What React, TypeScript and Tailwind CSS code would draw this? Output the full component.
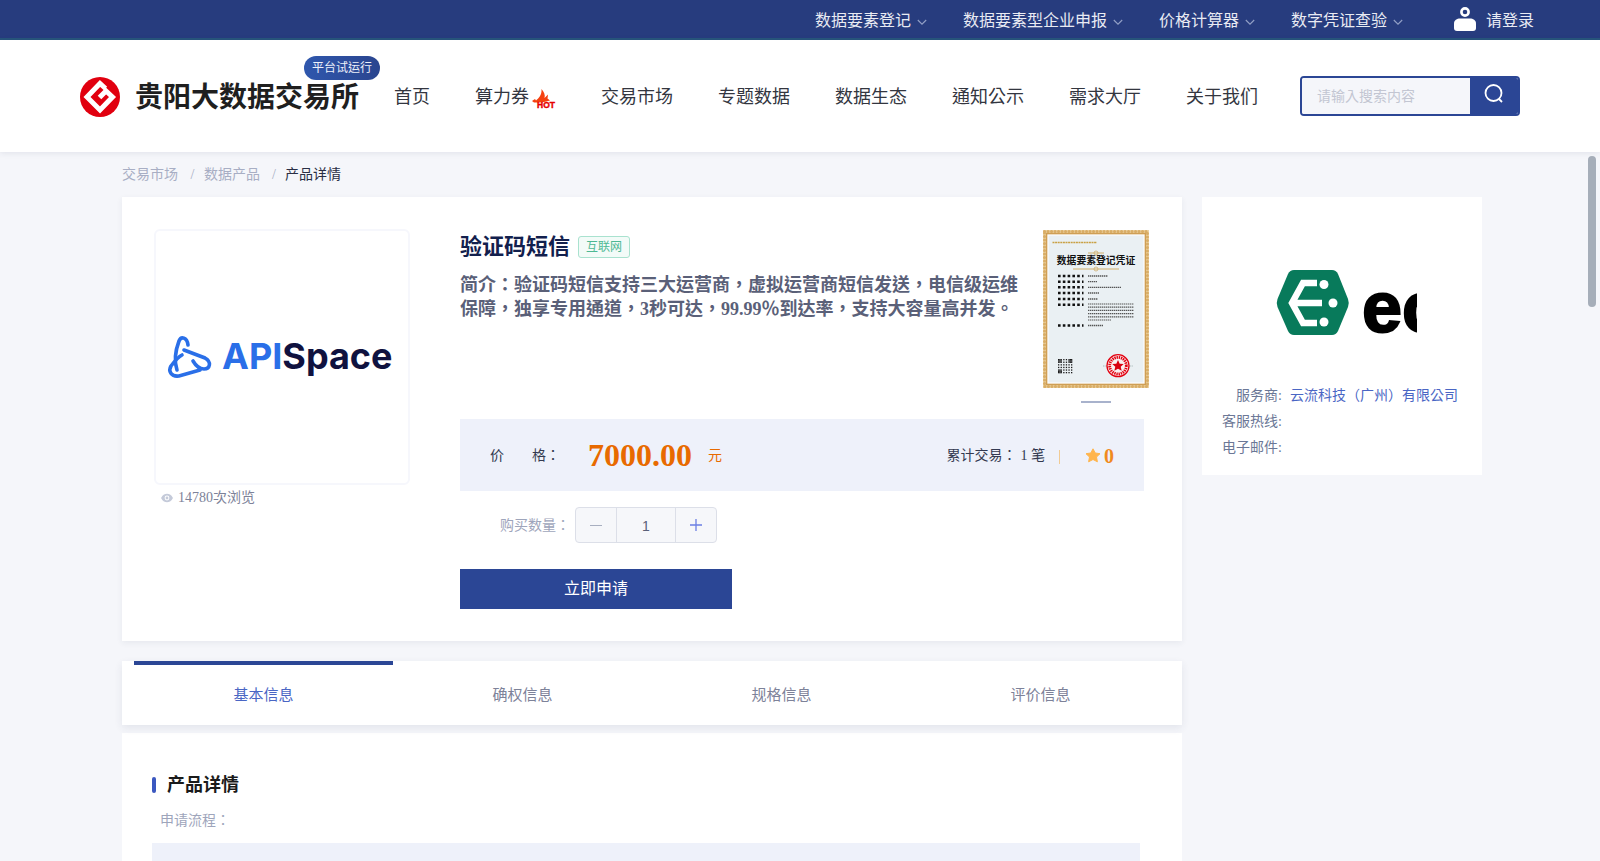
import React from "react";

const Chevron = () => (
  <svg width="10" height="10" viewBox="0 0 10 10" fill="none" stroke="#93a0c6" strokeWidth="1.100" className="ml-[6px] mt-[2px]">
    <path d="M0.8 3 L5 7.2 L9.2 3" />
  </svg>
);

const topItems = ["数据要素登记", "数据要素型企业申报", "价格计算器", "数字凭证查验"];
const navItems = ["交易市场", "专题数据", "数据生态", "通知公示", "需求大厅", "关于我们"];

const QR = () => {
  const cells: React.ReactNode[] = [];
  for (let y = 0; y < 11; y++) {
    for (let x = 0; x < 11; x++) {
      const finder = (x < 3 && y < 3) || (x > 7 && y < 3) || (x < 3 && y > 7);
      if (finder || (x * 5 + y * 3 + x * y) % 2 === 0) {
        cells.push(<rect key={x + "-" + y} x={15 + x * 1.3} y={129 + y * 1.3} width="1.3" height="1.3" fill="#1c1c1c" />);
      }
    }
  }
  return <g>{cells}</g>;
};

const Certificate = () => (
  <svg width="106" height="158" viewBox="0 0 106 158" className="shrink-0 mt-[1px]">
    <rect x="0" y="0" width="106" height="158" fill="#ecd3a3" />
    <rect x="1.500" y="1.500" width="103" height="155" fill="none" stroke="#d9ad66" strokeWidth="3" strokeLinecap="round" strokeDasharray="0.1 3.4" />
    <rect x="3.600" y="3.600" width="98.800" height="150.800" fill="#fff" stroke="#cf9f55" strokeWidth="1.500" />
    <rect x="5.500" y="5.500" width="95" height="147" fill="#eaf0f3" />
    <line x1="9.500" x2="54" y1="12.500" y2="12.500" stroke="#c9a043" strokeWidth="1.400" strokeDasharray="2 0.6" />
    <path d="M45 23 h16" stroke="#cfae6c" strokeWidth="1" />
    <circle cx="53" cy="23" r="2" fill="none" stroke="#cfae6c" strokeWidth="0.8" />
    <text x="53" y="34" textAnchor="middle" fontSize="9.800" fontWeight="700" fill="#111" fontFamily="'Noto Sans CJK TC',sans-serif">数据要素登记凭证</text>
    <path d="M30 39 h46" stroke="#cfae6c" strokeWidth="1" />
    <circle cx="53" cy="39" r="2" fill="none" stroke="#cfae6c" strokeWidth="0.8" />
    {[46, 51.7, 57.3, 63, 69, 74.7, 95.5].map((y) => (
      <line key={y} x1="15" x2="40.500" y1={y} y2={y} stroke="#111" strokeWidth="2.400" strokeDasharray="2.600 2.200" />
    ))}
    {[46, 51.7, 57.3, 63, 69, 95.5].map((y, i) => (
      <line key={y} x1="45" x2={[65, 54, 78, 56, 55, 60][i]} y1={y} y2={y} stroke="#555" strokeWidth="1.300" strokeDasharray="1.400 0.600" />
    ))}
    {[74, 77.2, 80.4, 83.6, 86.8, 90].map((y, i) => (
      <line key={y} x1="45" x2={i === 5 ? 68 : 91} y1={y} y2={y} stroke="#555" strokeWidth="1.200" strokeDasharray="1.400 0.600" />
    ))}
    <QR />
    <line x1="60" x2="90" y1="136" y2="136" stroke="#9aa" strokeWidth="0.800" strokeDasharray="1 0.600" />
    <circle cx="75" cy="135.700" r="11" fill="#f8f0f0" stroke="#e2000f" strokeWidth="1.300" />
    <circle cx="75" cy="135.700" r="8.300" fill="none" stroke="#e2000f" strokeWidth="2.800" strokeDasharray="1.400 0.800" />
    <path d="M75 130 l1.700 3.800 4 .3 -3 2.700 1 4 -3.700 -2.100 -3.700 2.100 1 -4 -3 -2.700 4 -.3 z" fill="#d8000f" />
  </svg>
);

export default function App() {
  return (
    <div className="relative h-screen overflow-hidden bg-[#f5f6fa] [font-family:'Liberation_Serif','Noto_Sans_CJK_TC',serif]">
      {/* top bar */}
      <div className="flex h-[40px] items-center justify-end border-b-2 border-[#27557c] bg-[#273c7e] pr-[66px] pt-[3px] text-base text-[#e9ebf3]">
        <div className="flex items-center gap-[36px]">
          {topItems.map((t) => (
            <div key={t} className="flex items-center">
              <span>{t}</span>
              <Chevron />
            </div>
          ))}
        </div>
        <div className="ml-[51px] flex items-center gap-[10px]">
          <svg width="22" height="24" viewBox="0 0 22 24" fill="none" className="mt-[-3px]">
            <circle cx="11" cy="5" r="3.600" stroke="#fff" strokeWidth="2.600" />
            <path d="M0 16.500 C0 13 3 11.500 6 11.500 H16 C19 11.500 22 13 22 16.500 V21 C22 23 21 24 19 24 H3 C1 24 0 23 0 21 Z" fill="#fff" />
          </svg>
          <span>请登录</span>
        </div>
      </div>

      {/* header */}
      <div className="relative flex h-[112px] items-center bg-white pl-[80px] shadow-[0_1px_6px_rgba(40,50,90,0.1)]">
        <svg width="40" height="40" viewBox="0 0 40 40" className="mt-[2px] shrink-0">
          <circle cx="20" cy="20" r="20" fill="#e1000f" />
          <path d="M25.500 11.500 L20 6.500 L7 20 L20 33 L32.500 20 L26 14 L19.500 20.500" fill="none" stroke="#fff" strokeWidth="5" strokeLinejoin="miter" />
        </svg>
        <div className="relative ml-[15px] pt-[3px]">
          <span className="text-[28px] font-bold text-[#1f1f1f]">贵阳大数据交易所</span>
          <span className="absolute left-[169px] top-[-18px] flex h-[24px] w-[76px] items-center justify-center rounded-full bg-gradient-to-r from-[#2f57ad] to-[#2a458f] text-xs text-[#eef1fa]">平台试运行</span>
        </div>
        <div className="ml-[35px] flex items-center gap-[45px] pt-[2px] text-lg text-[#33363f]">
          <span>首页</span>
          <span className="flex items-center">
            算力券
            <svg width="25" height="24" viewBox="0 0 25 24" className="ml-[2px] mt-[6px]">
              <path d="M1 13 L4 11 L5 12.500 C8 10 11 7 10.500 1 C13 4 14.500 7 13.500 10 L17 6.500 L16.500 10.500 L19 12.500 L13 14 L8 14.500 L3 14.500 Z" fill="#f5410f" />
              <text x="24" y="19.800" textAnchor="end" fontSize="8.500" fontWeight="700" fill="#e60000" stroke="#e60000" strokeWidth="0.400" fontFamily="'Liberation Sans',sans-serif">HOT</text>
            </svg>
          </span>
          {navItems.map((t) => (
            <span key={t}>{t}</span>
          ))}
        </div>
        <div className="ml-[42px] flex h-[40px] w-[220px] overflow-hidden rounded border-2 border-[#2b4695]">
          <div className="flex flex-1 items-center bg-[#f5f6fa] pl-[15px] pt-[2px] text-sm text-[#c3c6d2]">请输入搜索内容</div>
          <div className="flex w-[48px] items-center justify-center bg-[#2b4695] pb-[4px]">
            <svg width="22" height="22" viewBox="0 0 22 22" fill="none" stroke="#fff" strokeWidth="1.800">
              <circle cx="10.500" cy="10" r="8" />
              <path d="M16 16 L19 19" />
            </svg>
          </div>
        </div>
      </div>

      {/* body */}
      <div className="ml-[122px] flex w-[1360px] items-start gap-[20px]">
        <div className="w-[1060px]">
          <div className="flex h-[45px] items-center text-sm text-[#a8aec4]">
            <span>交易市场</span>
            <span className="w-[26px] pl-[3px] text-center">/</span>
            <span>数据产品</span>
            <span className="w-[25px] pl-[3px] text-center">/</span>
            <span className="text-[#2a2f45]">产品详情</span>
          </div>

          {/* product card */}
          <div className="flex h-[444px] bg-white pl-[32px] pt-[32px] shadow-[0_2px_6px_rgba(40,50,90,0.07)]">
            <div className="w-[256px] shrink-0">
              <div className="flex h-[256px] items-center rounded-md border-2 border-[#f6f7fc] pl-[9px]">
                <svg width="50" height="52" viewBox="0 0 50 52" fill="none" stroke="#2a6fe8" strokeWidth="3.600" strokeLinecap="round" className="shrink-0">
                  <path d="M12 39 C9 30 11 18 14 10 C16 5 22 6 23 14" />
                  <path d="M19 19 L40 27 C47 31 45 38 39 38 C34 38 31 35 28 30" />
                  <path d="M35 39 L14 45 C6 46 3 40 6 35 C9 31 13 26 17 24" />
                </svg>
                <span className="mb-[2px] ml-[7px] text-[36px] font-bold leading-none [font-family:Inter,sans-serif]">
                  <span className="text-[#2a6fe8]">API</span>
                  <span className="text-[#10123f]">Space</span>
                </span>
              </div>
              <div className="flex h-[24px] items-center pl-[7px] pt-[2px] text-sm text-[#7d8299]">
                <svg width="12" height="12" viewBox="0 0 12 12" className="mr-[5px]">
                  <path d="M0 6 C2 2.500 4 1.800 6 1.800 C8 1.800 10 2.500 12 6 C10 9.500 8 10.200 6 10.200 C4 10.200 2 9.500 0 6 Z" fill="#c4cad9" />
                  <circle cx="6" cy="6" r="2.400" fill="#fff" />
                  <circle cx="6" cy="6" r="1.400" fill="#c4cad9" />
                </svg>
                <span>14780次浏览</span>
              </div>
            </div>

            <div className="ml-[50px] w-[684px]">
              <div className="flex h-[190px]">
                <div className="w-[583px] shrink-0">
                  <div className="flex h-[36px] items-center">
                    <span className="pb-[1px] text-[22px] font-bold text-[#12204d]">验证码短信</span>
                    <span className="ml-[8px] flex h-[22px] w-[52px] items-center justify-center rounded-[3px] border border-[#a9e2cf] bg-[#f3fbf8] text-xs text-[#4db893]">互联网</span>
                  </div>
                  <p className="mt-[8px] w-[566px] text-lg font-bold leading-[24px] text-[#5a6078]">
                    简介：验证码短信支持三大运营商，虚拟运营商短信发送，电信级运维保障，独享专用通道，3秒可达，99.99％到达率，支持大容量高并发。
                  </p>
                </div>
                <div className="flex shrink-0 flex-col items-center">
                  <Certificate />
                  <div className="mt-[13px] h-[2px] w-[30px] bg-[#a8b2cc]" />
                </div>
              </div>

              <div className="flex h-[72px] items-center bg-[#eef1fa] px-[30px] pt-[2px] text-sm text-[#333950]">
                <span className="flex gap-[28px]">
                  <span>价</span>
                  <span>格：</span>
                </span>
                <span className="ml-[28px] text-[32px] font-bold text-[#e86a00]">7000.00</span>
                <span className="ml-[16px] text-[#e86a00]">元</span>
                <span className="ml-auto">累计交易：<span className="ml-[4px]">1 笔</span></span>
                <span className="ml-[14px] mt-[2px] h-[14px] w-px bg-[#f1cb94]" />
                <svg width="16" height="15" viewBox="0 0 16 15" className="ml-[25px] mb-[2px]">
                  <path d="M8 0.800 L10.200 5 L15 5.700 L11.500 9 L12.400 13.800 L8 11.500 L3.600 13.800 L4.500 9 L1 5.700 L5.800 5 Z" fill="#ffb54d" stroke="#ffb54d" strokeLinejoin="round" />
                </svg>
                <span className="ml-[3px] text-xl font-bold text-[#f08a1e]">0</span>
              </div>

              <div className="mt-[16px] flex items-center pl-[40px]">
                <span className="pt-[2px] text-sm text-[#9ea5bb]">购买数量：</span>
                <div className="ml-[5px] flex h-[36px] w-[142px] items-center overflow-hidden rounded border border-[#dcdfe8] bg-[#f6f7fa]">
                  <div className="flex h-full w-[41px] items-center justify-center border-r border-[#dcdfe8]">
                    <span className="h-px w-[12px] bg-[#a8afc0]" />
                  </div>
                  <div className="flex h-full flex-1 items-center justify-center pt-[2px] text-sm text-[#5a6078] [font-family:'Liberation_Sans',sans-serif]">1</div>
                  <div className="relative flex h-full w-[41px] items-center justify-center border-l border-[#dcdfe8]">
                    <svg width="12" height="12" viewBox="0 0 12 12" stroke="#6b7fe3" strokeWidth="1.300">
                      <path d="M0 6 H12 M6 0 V12" />
                    </svg>
                  </div>
                </div>
              </div>

              <button className="mt-[26px] block h-[40px] w-[272px] bg-[#2b4695] text-base text-white">立即申请</button>
            </div>
          </div>

          {/* tabs */}
          <div className="relative z-10 mt-[20px] grid h-[64px] grid-cols-[repeat(4,259px)] bg-white px-[12px] text-[15px] text-[#7d8299] shadow-[0_3px_8px_rgba(40,50,90,0.09)]">
            <div className="flex items-center justify-center border-t-4 border-[#2b4695] pt-[1px] text-[#4a66c4]">基本信息</div>
            <div className="flex items-center justify-center pt-[5px]">确权信息</div>
            <div className="flex items-center justify-center pt-[5px]">规格信息</div>
            <div className="flex items-center justify-center pt-[5px]">评价信息</div>
          </div>

          {/* detail */}
          <div className="mt-[8px] h-[300px] bg-white px-[30px] pt-[42px]">
            <div className="flex h-[20px] items-center">
              <span className="h-[16px] w-[4px] rounded-sm bg-[#3b58c0]" />
              <span className="ml-[11px] text-lg font-bold text-[#1a1a1a]">产品详情</span>
            </div>
            <div className="mt-[16px] h-[20px] pl-[8px] text-sm text-[#9ea5bb]">申请流程：</div>
            <div className="mt-[12px] h-[200px] w-[988px] bg-[#eef1fa]" />
          </div>
        </div>

        {/* provider */}
        <div className="mt-[45px] w-[280px] bg-white pb-[14px] pt-[65px]">
          <svg width="147" height="80" viewBox="0 0 147 80" className="ml-[68px] block">
            <path d="M24 8 H62 Q66 8 68 12 L78 37 Q79.500 41 78 45 L68 69 Q66 73 62 73 H24 Q20 73 18 69 L7.500 45 Q6 41 7.500 37 L18 12 Q20 8 24 8 Z" fill="#087a5b" />
            <path d="M47 21 H33 L22 41 L33 61 H47 M23 41 H52" fill="none" stroke="#fff" strokeWidth="6.500" />
            <circle cx="54" cy="22.500" r="4.500" fill="#fff" />
            <circle cx="63" cy="41" r="4.500" fill="#fff" />
            <circle cx="54" cy="60" r="4.500" fill="#fff" />
            <text x="92" y="70" fontSize="72" fontWeight="700" fill="#000" stroke="#000" strokeWidth="2" fontFamily="'Liberation Sans',sans-serif">ec</text>
          </svg>
          <div className="mt-[41px] text-sm leading-[26px] text-[#6b7796]">
            <div className="flex">
              <span className="w-[80px] text-right">服务商:</span>
              <span className="ml-[8px] text-[#4a66c4]">云流科技（广州）有限公司</span>
            </div>
            <div className="w-[80px] text-right">客服热线:</div>
            <div className="w-[80px] text-right">电子邮件:</div>
          </div>
        </div>
      </div>

      {/* scrollbar thumb */}
      <div className="absolute right-[4px] top-[156px] h-[151px] w-[8px] rounded-full bg-[#a6aeb9]" />
    </div>
  );
}
